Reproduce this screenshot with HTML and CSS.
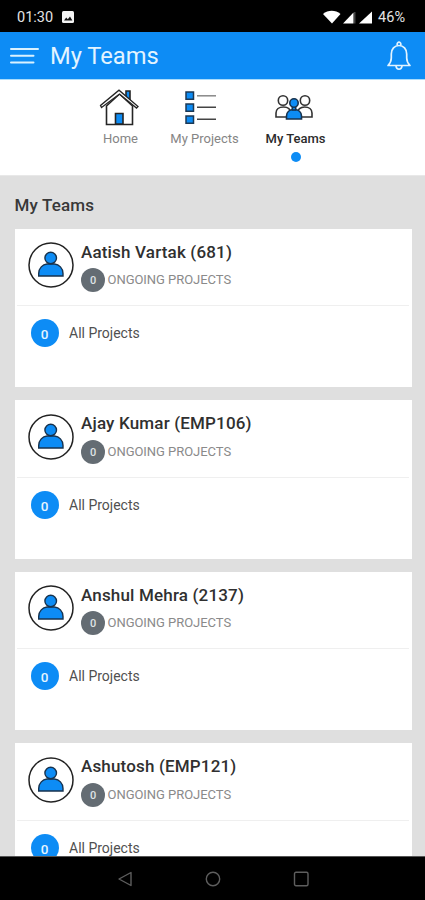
FILE: index.html
```html
<!DOCTYPE html>
<html lang="en">
<head>
<meta charset="utf-8">
<meta name="viewport" content="width=device-width, initial-scale=1">
<title>My Teams</title>
<link rel="stylesheet" href="styles.css">
</head>
<body>
<svg class="defs" width="0" height="0">
  <symbol id="avatar" viewBox="0 0 46 46">
    <circle cx="23" cy="23" r="22" fill="#fff" stroke="#222" stroke-width="1.5"/>
    <path d="M10.7 34v-2.5c0-5.500 4-9 8.300-9.500h7.500c4.500.500 8.500 4 8.500 9.500V34z" fill="#0d8cf5" stroke="#17324d" stroke-width="1.400"/>
    <circle cx="22.700" cy="16" r="5.800" fill="#0d8cf5" stroke="#17324d" stroke-width="1.400"/>
  </symbol>
</svg>
<div class="phone">
  <div class="status">
    <span class="time">01:30</span>
    <svg class="pic" width="12" height="12" viewBox="0 0 12 12"><rect width="12" height="12" rx="1.500" fill="#f4f4f4"/><path d="M2 9.500l2.200-3 1.600 1.800L8 5.500l2.400 4z" fill="#111"/></svg>
    <svg class="signals" width="50" height="14" viewBox="0 0 50 14"><path d="M0 4C5-.3 12.500-.3 17.500 4L9 13.500z" fill="#fff"/><path d="M20 13.500L30.500 2.500v11z" fill="#fff"/><path d="M31 2h1.500v11.500H31z" fill="#444"/><path d="M36 13.500L49 1.500v12z" fill="#fff"/></svg>
    <span class="battery">46%</span>
  </div>
  <header class="bar">
    <svg width="29" height="18" viewBox="0 0 29 18" stroke="#d9f1ff" stroke-width="2" stroke-linecap="round"><path d="M1 2h27M1 8.700h22.500M1 15.500h22.500"/></svg>
    <h1>My Teams</h1>
    <svg class="bell" width="26" height="30" viewBox="0 0 26 30" fill="none" stroke="#e3f4ff" stroke-width="1.700" stroke-linejoin="round"><path d="M2 24.500c2-2 3.300-4 3.300-7.500v-4C5.300 8 8.500 4.500 13 4.500S20.700 8 20.700 13v4c0 3.500 1.300 5.500 3.300 7.500z"/><path d="M11.200 4.500V3a1.800 1.800 0 0 1 3.600 0v1.500M10 25c.5 4.300 5.500 4.300 6 0"/></svg>
  </header>
  <nav class="tabs">
    <div class="tab home">
      <svg width="40" height="37" viewBox="0 0 40 37" stroke="#252525" stroke-width="1.600"><path d="M27 9V2h4v12" fill="#0d8cf5"/><path d="M7.500 17v18.500h26V17L20.500 5z" fill="#fff"/><path d="M2.500 18.500L1.500 16.500 20 1.200l19 16.300-1.500 1.500L20.500 5z" fill="#fff" stroke-width="1.300"/><path d="M16.500 35V24.500h7.500V35z" fill="#0d8cf5"/></svg>
      <span>Home</span>
    </div>
    <div class="tab projects">
      <svg width="32" height="37" viewBox="0 0 32 37"><g fill="#0d8cf5" stroke="#1c3854" stroke-width="1.500"><path d="M1 3h7.500v7.200H1zM1 15h7.500v7.200H1zM1 27h7.500v7.200H1z"/></g><path d="M12 6.800h19" stroke="#888" stroke-width="1.500"/><path d="M12 18.300h19M12 30.300h19" stroke="#444" stroke-width="1.600"/></svg>
      <span>My Projects</span>
    </div>
    <div class="tab teams active">
      <svg width="38" height="37" viewBox="0 0 38 37" fill="#fff" stroke="#333" stroke-width="1.600"><path d="M1 28v-4c0-3.500 3-6 7.500-6s7 2.500 7 6v4z"/><path d="M22.500 28v-4c0-3.500 3-6 7-6 4.500 0 7.500 2.500 7.500 6v4z"/><circle cx="8" cy="11.500" r="4.700"/><circle cx="30" cy="11.500" r="4.700"/><g fill="#0d8cf5" stroke="#17324d"><path d="M11.500 30v-3c0-4 3-6.500 7.500-6.500s7.500 2.500 7.500 6.500v3z"/><path d="M17.300 17.500h3.400v3.500h-3.400z"/><circle cx="19" cy="14" r="4.200"/></g></svg>
      <span>My Teams</span>
      <i class="dot"></i>
    </div>
  </nav>
  <main>
    <h2>My Teams</h2>
    <article class="card">
      <div class="top"><svg class="avatar"><use href="#avatar"/></svg><div><h3>Aatish Vartak (681)</h3><p><b class="badge">0</b><span>ONGOING PROJECTS</span></p></div></div>
      <div class="all"><b class="count">0</b><span>All Projects</span></div>
    </article>
    <article class="card">
      <div class="top"><svg class="avatar"><use href="#avatar"/></svg><div><h3>Ajay Kumar (EMP106)</h3><p><b class="badge">0</b><span>ONGOING PROJECTS</span></p></div></div>
      <div class="all"><b class="count">0</b><span>All Projects</span></div>
    </article>
    <article class="card">
      <div class="top"><svg class="avatar"><use href="#avatar"/></svg><div><h3>Anshul Mehra (2137)</h3><p><b class="badge">0</b><span>ONGOING PROJECTS</span></p></div></div>
      <div class="all"><b class="count">0</b><span>All Projects</span></div>
    </article>
    <article class="card">
      <div class="top"><svg class="avatar"><use href="#avatar"/></svg><div><h3>Ashutosh (EMP121)</h3><p><b class="badge">0</b><span>ONGOING PROJECTS</span></p></div></div>
      <div class="all"><b class="count">0</b><span>All Projects</span></div>
    </article>
  </main>
  <footer class="softkeys">
    <svg width="16" height="18" viewBox="0 0 16 18"><path d="M14 2.500v13L2 9z"/></svg>
    <svg width="16" height="18" viewBox="0 0 16 18"><circle cx="8" cy="9" r="6.700"/></svg>
    <svg width="16" height="18" viewBox="0 0 16 18"><rect x="1.500" y="2.300" width="13.500" height="13.500" rx="1.500"/></svg>
  </footer>
</div>
</body>
</html>
```
FILE: styles.css
```css
* { box-sizing: border-box; }
body { margin: 0; font-family: Roboto, "Liberation Sans", sans-serif; background: #000; }
h1, h2, h3, p { margin: 0; }
svg { display: block; flex: none; }
.defs { position: absolute; }
.phone { width: 425px; height: 900px; overflow: hidden; display: flex; flex-direction: column; }
.status { height: 32px; flex: none; background: #000; color: #e4e4e4; display: flex; align-items: center; padding: 2px 20px 0 17px; font-size: 14.5px; }
.pic { margin-left: 9px; }
.signals { margin-left: auto; }
.battery { margin-left: 5px; font-size: 14.5px; }
.bar { height: 48px; flex: none; background: #0d8cf5; border-bottom: 1px solid #a9dcfc; display: flex; align-items: center; padding: 0 13px 0 10px; }
.bar h1 { margin-left: 11px; font-weight: 400; font-size: 23.7px; line-height: 28px; color: #e3f4ff; }
.bell { margin-left: auto; }
.tabs { height: 96px; flex: none; background: #fff; border-bottom: 1px solid #e8e8e8; display: flex; justify-content: center; padding: 9px 9px 0 0; }
.tab { display: flex; flex-direction: column; align-items: center; font-size: 13px; line-height: 16px; color: #858585; white-space: nowrap; }
.tab span { margin-top: 5px; }
.home { width: 60px; margin-right: 19px; }
.home svg { margin-right: 4px; }
.projects { width: 70px; }
.projects svg { margin-right: 7px; }
.teams { width: 60px; margin-left: 26px; }
.teams svg { margin-right: 4px; }
.active { color: #2b2b2b; font-weight: 500; }
.dot { width: 10px; height: 10px; border-radius: 50%; background: #0d8cf5; margin-top: 5px; }
main { flex: 1; min-height: 0; overflow: hidden; background: #dfdfdf; padding: 18px 13px 0 14.5px; }
main h2 { font-size: 17px; font-weight: 500; line-height: 22px; letter-spacing: 0.15px; color: #383838; margin-bottom: 12.5px; }
.card { height: 158.5px; margin-bottom: 13px; background: #fff; padding: 0 3px 0 2px; }
.top { height: 77.5px; border-bottom: 1px solid #efefef; display: flex; padding: 13.5px 0 0 11.5px; }
.avatar { width: 46px; height: 46px; margin-right: 7px; }
h3 { font-size: 17px; font-weight: 500; line-height: 22px; letter-spacing: 0.17px; margin-top: -1.5px; color: #303030; white-space: nowrap; }
.top p { display: flex; align-items: center; height: 24px; margin-top: 5.5px; font-size: 13px; letter-spacing: -0.04px; color: #8a8a8a; }
.top p span { margin-top: -1px; }
.badge { width: 24px; height: 24px; border-radius: 50%; background: #646c73; color: #dfe3e6; font-size: 11px; font-weight: 500; line-height: 26px; text-align: center; margin-right: 2.5px; }
.all { display: flex; align-items: center; padding: 13px 0 0 14px; font-size: 14px; color: #505050; }
.count { width: 28px; height: 28px; border-radius: 50%; background: #0d8cf5; color: #e6f5ff; font-size: 13.5px; font-weight: 500; line-height: 31px; text-align: center; margin-right: 10.5px; }
.softkeys { height: 44.5px; flex: none; background: #000; border-top: 1px solid #555; display: flex; justify-content: center; gap: 72px; padding-top: 13px; }
.softkeys svg { fill: none; stroke: #5e5e5e; stroke-width: 1.4; stroke-linejoin: round; }
```
